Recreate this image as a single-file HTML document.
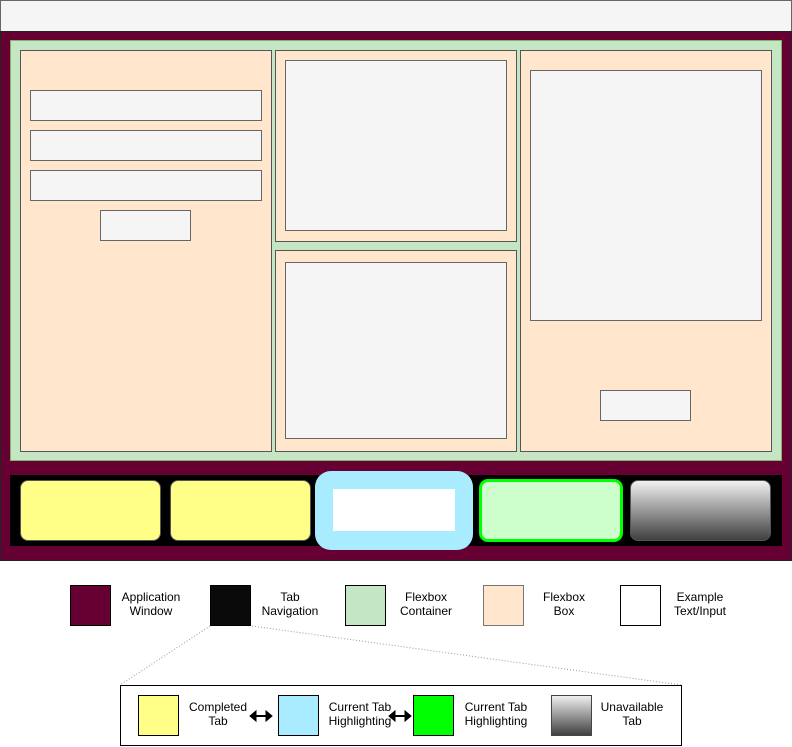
<!DOCTYPE html><html><head><style>
body{margin:0;width:792px;height:747px;background:#fff;position:relative;font-family:"Liberation Sans",sans-serif;overflow:hidden}
div{position:absolute;box-sizing:border-box}
.pb{background:#ffe6cc;border:1px solid #555}
.g{background:#f5f5f5;border:1px solid #666}
.sq{width:41px;height:41px;border:1px solid #000}
.t{font-size:12px;line-height:14px;text-align:center;width:120px;color:#000}
.y{background:#ffff88;border:1px solid #555;border-radius:8px}
</style></head><body>
<div style="left:0;top:0;width:792px;height:32px;background:#f5f5f5;border:1px solid #666"></div>
<div style="left:0;top:31px;width:792px;height:530px;background:#660033;border:1px solid #222"></div>
<div style="left:10px;top:40px;width:772px;height:421px;background:#c5e6c5;border:1px solid #82b366"></div>
<div class="pb" style="left:20px;top:50px;width:252px;height:402px"></div>
<div class="pb" style="left:275px;top:50px;width:242px;height:192px"></div>
<div class="pb" style="left:275px;top:250px;width:242px;height:202px"></div>
<div class="pb" style="left:520px;top:50px;width:252px;height:402px"></div>
<div class="g" style="left:30px;top:90px;width:232px;height:31px"></div>
<div class="g" style="left:30px;top:130px;width:232px;height:31px"></div>
<div class="g" style="left:30px;top:170px;width:232px;height:31px"></div>
<div class="g" style="left:100px;top:210px;width:91px;height:31px"></div>
<div class="g" style="left:285px;top:60px;width:222px;height:171px"></div>
<div class="g" style="left:285px;top:262px;width:222px;height:177px"></div>
<div class="g" style="left:530px;top:70px;width:232px;height:251px"></div>
<div class="g" style="left:600px;top:390px;width:91px;height:31px"></div>
<div style="left:10px;top:475px;width:772px;height:71px;background:#000"></div>
<div class="y" style="left:20px;top:480px;width:141px;height:61px"></div>
<div class="y" style="left:170px;top:480px;width:141px;height:61px"></div>
<div style="left:315px;top:471px;width:158px;height:79px;background:#a9ecff;border-radius:16px"></div>
<div style="left:333px;top:489px;width:122px;height:42px;background:#fff"></div>
<div style="left:479px;top:479px;width:144px;height:63px;background:#ccffcc;border:3px solid #00ff00;border-radius:9px"></div>
<div style="left:630px;top:480px;width:141px;height:61px;border:1px solid #555;border-radius:8px;background:linear-gradient(#f0f0f0,#404040)"></div>
<div class="sq" style="left:70px;top:585px;background:#660033"></div>
<div class="sq" style="left:210px;top:585px;background:#0a0a0a"></div>
<div class="sq" style="left:345px;top:585px;background:#c5e6c5"></div>
<div class="sq" style="left:483px;top:585px;background:#ffe6cc;border-color:#777"></div>
<div class="sq" style="left:620px;top:585px;background:#fff"></div>
<div class="t" style="left:91px;top:590px">Application<br>Window</div>
<div class="t" style="left:230px;top:590px">Tab<br>Navigation</div>
<div class="t" style="left:366px;top:590px">Flexbox<br>Container</div>
<div class="t" style="left:504px;top:590px">Flexbox<br>Box</div>
<div class="t" style="left:640px;top:590px">Example<br>Text/Input</div>
<svg style="position:absolute;left:0;top:0" width="792" height="747"><g stroke="#999" stroke-dasharray="1,2" fill="none"><line x1="210" y1="626" x2="120" y2="685"/><line x1="252" y1="626" x2="681" y2="685"/></g></svg>
<div style="left:120px;top:685px;width:562px;height:61px;border:1px solid #000;background:#fff"></div>
<div class="sq" style="left:138px;top:695px;background:#ffff88"></div>
<div class="sq" style="left:278px;top:695px;background:#a9ecff"></div>
<div class="sq" style="left:413px;top:695px;background:#00ff00"></div>
<div class="sq" style="left:551px;top:695px;background:linear-gradient(#f0f0f0,#404040);border-color:#444"></div>
<div class="t" style="left:158px;top:700px">Completed<br>Tab</div>
<div class="t" style="left:300px;top:700px">Current Tab<br>Highlighting</div>
<div class="t" style="left:436px;top:700px">Current Tab<br>Highlighting</div>
<div class="t" style="left:572px;top:700px">Unavailable<br>Tab</div>
<svg style="position:absolute;left:0;top:0" width="792" height="747"><g fill="#000" stroke="#000"><line x1="255" y1="716" x2="267" y2="716" stroke-width="2"/><path d="M250 716l6-5v10z M272 716l-6-5v10z"/><line x1="394" y1="716" x2="406" y2="716" stroke-width="2"/><path d="M389 716l6-5v10z M411 716l-6-5v10z"/></g></svg>
</body></html>
